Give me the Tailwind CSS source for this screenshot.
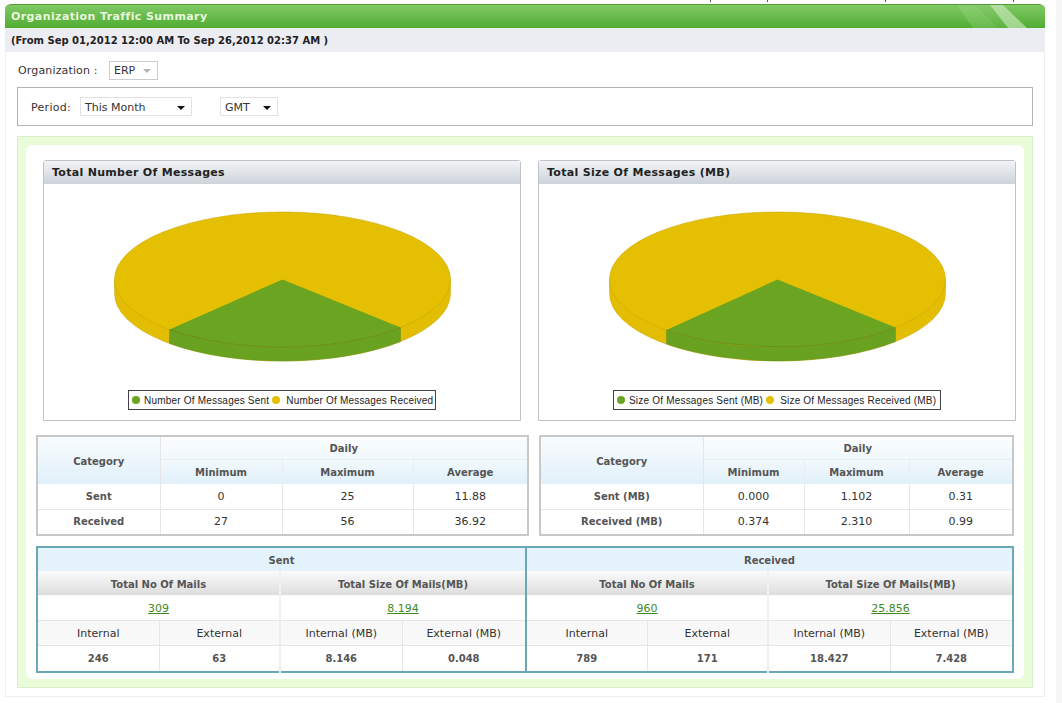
<!DOCTYPE html>
<html lang="en">
<head>
<meta charset="UTF-8" />
<title>Organization Traffic Summary</title>
<script src="https://cdn.jsdelivr.net/npm/@tailwindcss/browser@4"></script>
</head>
<body class="bg-white font-['DejaVu_Sans',Verdana,sans-serif] text-[11px] text-[#333]">
<div class="relative h-[703px] w-[1062px] overflow-hidden pt-[4px]">
  <!-- clipped text from the page above -->
  <div class="absolute left-[710px] top-0 h-[2px] w-px bg-[#555]"></div>
  <div class="absolute left-[767px] top-0 h-[2px] w-px bg-[#555]"></div>
  <div class="absolute left-[885px] top-0 h-[2px] w-px bg-[#555]"></div>
  <div class="absolute left-[1013px] top-0 h-[2px] w-px bg-[#555]"></div>
  <div class="absolute bottom-0 right-0 top-0 w-[6px] bg-[#f7f7f7]"></div>

  <div class="ml-[5px] w-[1040px] h-[693px] border border-t-0 border-[#eeeeee]">
    <!-- title bar -->
    <div class="relative -mx-px h-[24px] rounded-t-[6px] border-t border-[#4f9e38] bg-gradient-to-b from-[#80c964] to-[#4fac31] pl-[6px] text-[11px] font-bold leading-[24px] tracking-[0.4px] text-[#e9f6df]">
      Organization Traffic Summary
      <svg class="absolute right-0 top-0" width="90" height="23" viewBox="0 0 90 23">
        <polygon points="2,0 20,0 43,23 18,23" fill="#a6d98f" fill-opacity="0.3"/>
        <polygon points="20,0 35,0 53,23 43,23" fill="#a6d98f" fill-opacity="0.15"/>
        <polygon points="35,0 48,0 72,23 53,23" fill="#d6efc8" fill-opacity="0.6"/>
      </svg>
    </div>
    <div class="-mx-px h-[24px] bg-[#ecedf3] pl-[6px] text-[10px] font-bold leading-[25px] text-[#222]">(From Sep 01,2012 12:00 AM To Sep 26,2012 02:37 AM )</div>

    <!-- organization -->
    <div class="mt-[8px] flex h-[20px] items-center pl-[12px]">
      <span class="w-[91px] pt-[2px] tracking-[0.15px]">Organization :</span>
      <div class="flex h-[19px] w-[49px] items-center justify-between border border-[#cccccc] pl-[4px] pr-[6px] pt-[2px]">
        <span>ERP</span>
        <span class="h-0 w-0 border-x-[4px] border-t-[4px] border-x-transparent border-t-[#b5b5b5]"></span>
      </div>
    </div>

    <!-- period -->
    <div class="ml-[11px] mt-[7px] flex h-[39px] w-[1016px] items-center border border-[#b4b4b4] pl-[13px]">
      <span class="w-[49px] pt-[4px] tracking-[0.3px]">Period:</span>
      <div class="flex h-[19px] w-[112px] items-center justify-between border border-[#e2e2e2] pl-[4px] pr-[6px] pt-[3px]">
        <span>This Month</span>
        <span class="h-0 w-0 border-x-[4px] border-t-[4px] border-x-transparent border-t-[#111]"></span>
      </div>
      <div class="ml-[28px] flex h-[19px] w-[58px] items-center justify-between border border-[#e2e2e2] pl-[4px] pr-[6px] pt-[3px]">
        <span>GMT</span>
        <span class="h-0 w-0 border-x-[4px] border-t-[4px] border-x-transparent border-t-[#111]"></span>
      </div>
    </div>

    <!-- report box -->
    <div class="ml-[11px] mt-[10px] h-[552px] w-[1016px] border border-[#d9efc8] bg-[#e9fbd9] p-[8px]">
      <div class="h-[534px] w-[998px] rounded-[6px] bg-white pt-[15px]">
        <!-- charts -->
        <div class="flex gap-[17px] pl-[17px]">
          <div class="h-[261px] w-[478px] rounded-t-[3px] border border-[#bfc3c8]">
            <div class="h-[23px] bg-gradient-to-b from-[#f2f4f6] to-[#cdd3da] pl-[8px] font-bold leading-[24px] tracking-[0.3px] text-[#222]">Total Number Of Messages</div>
            <svg class="block" width="476" height="205" viewBox="43.5 184 476 205">
              <path d="M114 279.5V293.5A168 67.5 0 0 0 450 293.5V279.5Z" fill="#e3bd02" stroke="#c9a808" stroke-width="0.5"/>
              <path d="M169 329.5A168 67.5 0 0 0 400 327.6V341.6A168 67.5 0 0 1 169 343.5Z" fill="#69a221" stroke="#5b8c1e" stroke-width="0.4"/>
              <ellipse cx="282" cy="279.5" rx="168" ry="67.5" fill="#e5bf02" stroke="#caa70a" stroke-width="0.6"/>
              <path d="M282 279.5L169 329.5A168 67.5 0 0 0 400 327.6Z" fill="#6ba421"/>
              <path d="M169 329.5A168 67.5 0 0 0 400 327.6" fill="none" stroke="#4f7f1c" stroke-width="0.6"/>
            </svg>
            <div class="mt-[1px] flex justify-center">
              <div class="flex h-[20px] w-[308px] items-center gap-[4px] whitespace-nowrap border border-[#444] pl-[3px] font-['Liberation_Sans',Arial,sans-serif] text-[10px] tracking-[0.2px] text-[#222]">
                <span class="size-[8px] shrink-0 rounded-full bg-[#6ba421]"></span><span class="mr-[-1px]">Number Of Messages Sent</span>
                <span class="size-[8px] shrink-0 rounded-full bg-[#e5bf02]"></span><span class="ml-[2px]">Number Of Messages Received</span>
              </div>
            </div>
          </div>
          <div class="h-[261px] w-[478px] rounded-t-[3px] border border-[#bfc3c8]">
            <div class="h-[23px] bg-gradient-to-b from-[#f2f4f6] to-[#cdd3da] pl-[8px] font-bold leading-[24px] tracking-[0.3px] text-[#222]">Total Size Of Messages (MB)</div>
            <svg class="block" width="476" height="205" viewBox="43.5 184 476 205">
              <path d="M114 279.5V293.5A168 67.5 0 0 0 450 293.5V279.5Z" fill="#e3bd02" stroke="#c9a808" stroke-width="0.5"/>
              <path d="M171 330A168 67.5 0 0 0 400 327.6V341.6A168 67.5 0 0 1 171 344Z" fill="#69a221" stroke="#5b8c1e" stroke-width="0.4"/>
              <ellipse cx="282" cy="279.5" rx="168" ry="67.5" fill="#e5bf02" stroke="#caa70a" stroke-width="0.6"/>
              <path d="M282 279.5L171 330A168 67.5 0 0 0 400 327.6Z" fill="#6ba421"/>
              <path d="M171 330A168 67.5 0 0 0 400 327.6" fill="none" stroke="#4f7f1c" stroke-width="0.6"/>
            </svg>
            <div class="mt-[1px] flex justify-center">
              <div class="flex h-[20px] w-[328px] items-center gap-[4px] whitespace-nowrap border border-[#444] pl-[3px] font-['Liberation_Sans',Arial,sans-serif] text-[10px] tracking-[0.2px] text-[#222]">
                <span class="size-[8px] shrink-0 rounded-full bg-[#6ba421]"></span><span class="mr-[-1px]">Size Of Messages Sent (MB)</span>
                <span class="size-[8px] shrink-0 rounded-full bg-[#e5bf02]"></span><span class="ml-[2px]">Size Of Messages Received (MB)</span>
              </div>
            </div>
          </div>
        </div>

        <!-- daily tables -->
        <div class="mt-[14px] flex gap-[10px] pl-[10px]">
          <table class="h-[101px] w-[493px] table-fixed border-collapse border-2 border-[#c8c8c8] text-center">
            <colgroup><col class="w-[123px]"/><col class="w-[122px]"/><col class="w-[131px]"/><col/></colgroup>
            <tr class="h-[23px]">
              <th rowspan="2" class="border-r border-[#e6e6e6] bg-gradient-to-b from-[#f9fcfe] to-[#e0f0fa] pt-[1px] text-[10px] font-bold text-[#555]">Category</th>
              <th colspan="3" class="border-b border-[#e3edf3] bg-gradient-to-b from-[#fbfdfe] to-[#f0f8fc] pt-[2px] text-[10px] font-bold text-[#555]">Daily</th>
            </tr>
            <tr class="h-[25px] bg-gradient-to-b from-[#f3f9fc] to-[#e0f0fa] text-[10px] font-bold text-[#555]">
              <th class="border-r border-[#e8eff3]">Minimum</th><th class="border-r border-[#e8eff3]">Maximum</th><th>Average</th>
            </tr>
            <tr class="h-[25px] border-b border-[#e6e6e6]">
              <td class="border-r border-[#e6e6e6] text-[10px] font-bold text-[#555]">Sent</td><td class="border-r border-[#e6e6e6]">0</td><td class="border-r border-[#e6e6e6]">25</td><td>11.88</td>
            </tr>
            <tr class="h-[25px]">
              <td class="border-r border-[#e6e6e6] pb-[2px] text-[10px] font-bold text-[#555]">Received</td><td class="border-r border-[#e6e6e6]">27</td><td class="border-r border-[#e6e6e6]">56</td><td>36.92</td>
            </tr>
          </table>
          <table class="h-[101px] w-[475px] table-fixed border-collapse border-2 border-[#c8c8c8] text-center">
            <colgroup><col class="w-[163px]"/><col class="w-[101px]"/><col class="w-[105px]"/><col/></colgroup>
            <tr class="h-[23px]">
              <th rowspan="2" class="border-r border-[#e6e6e6] bg-gradient-to-b from-[#f9fcfe] to-[#e0f0fa] pt-[1px] text-[10px] font-bold text-[#555]">Category</th>
              <th colspan="3" class="border-b border-[#e3edf3] bg-gradient-to-b from-[#fbfdfe] to-[#f0f8fc] pt-[2px] text-[10px] font-bold text-[#555]">Daily</th>
            </tr>
            <tr class="h-[25px] bg-gradient-to-b from-[#f3f9fc] to-[#e0f0fa] text-[10px] font-bold text-[#555]">
              <th class="border-r border-[#e8eff3]">Minimum</th><th class="border-r border-[#e8eff3]">Maximum</th><th>Average</th>
            </tr>
            <tr class="h-[25px] border-b border-[#e6e6e6]">
              <td class="border-r border-[#e6e6e6] text-[10px] font-bold text-[#555]">Sent (MB)</td><td class="border-r border-[#e6e6e6]">0.000</td><td class="border-r border-[#e6e6e6]">1.102</td><td>0.31</td>
            </tr>
            <tr class="h-[25px]">
              <td class="border-r border-[#e6e6e6] pb-[2px] text-[10px] font-bold text-[#555]">Received (MB)</td><td class="border-r border-[#e6e6e6]">0.374</td><td class="border-r border-[#e6e6e6]">2.310</td><td>0.99</td>
            </tr>
          </table>
        </div>

        <!-- sent / received table -->
        <div class="ml-[10px] mt-[10px]">
          <table class="h-[127px] w-[978px] table-fixed border-collapse border-2 border-[#6ba8b5] text-center">
            <colgroup>
              <col class="w-[122px]"/><col class="w-[121px]"/><col class="w-[122px]"/><col class="w-[124px]"/>
              <col class="w-[121px]"/><col class="w-[121px]"/><col class="w-[122px]"/><col/>
            </colgroup>
            <tr class="h-[24px] bg-[#e3f2fb] text-[10px] font-bold text-[#555]">
              <th colspan="4" class="border-r-2 border-[#6ba8b5] pt-[1px]">Sent</th>
              <th colspan="4" class="pt-[1px]">Received</th>
            </tr>
            <tr class="h-[24px] bg-gradient-to-b from-[#fbfbfb] to-[#dddddd] text-[10px] font-bold text-[#555]">
              <th colspan="2" class="border-r-2 border-[#f0f0f0] pt-[1px]">Total No Of Mails</th>
              <th colspan="2" class="border-r-2 border-[#6ba8b5] pt-[1px]">Total Size Of Mails(MB)</th>
              <th colspan="2" class="border-r-2 border-[#f0f0f0] pt-[1px]">Total No Of Mails</th>
              <th colspan="2" class="pt-[1px]">Total Size Of Mails(MB)</th>
            </tr>
            <tr class="h-[24px] border-b border-[#e6e6e6] text-[#3f8a1f]">
              <td colspan="2" class="border-r-2 border-[#f0f0f0] pt-[3px]"><a class="underline">309</a></td>
              <td colspan="2" class="border-r-2 border-[#6ba8b5] pt-[3px]"><a class="underline">8.194</a></td>
              <td colspan="2" class="border-r-2 border-[#f0f0f0] pt-[3px]"><a class="underline">960</a></td>
              <td colspan="2" class="pt-[3px]"><a class="underline">25.856</a></td>
            </tr>
            <tr class="h-[25px] border-b border-[#e6e6e6] bg-[#f8f8f8]">
              <td class="border-r border-[#e6e6e6] pt-[2px]">Internal</td><td class="border-r-2 border-[#eeeeee] pt-[2px]">External</td>
              <td class="border-r border-[#e6e6e6] pt-[2px]">Internal (MB)</td><td class="border-r-2 border-[#6ba8b5] pt-[2px]">External (MB)</td>
              <td class="border-r border-[#e6e6e6] pt-[2px]">Internal</td><td class="border-r-2 border-[#eeeeee] pt-[2px]">External</td>
              <td class="border-r border-[#e6e6e6] pt-[2px]">Internal (MB)</td><td class="pt-[2px]">External (MB)</td>
            </tr>
            <tr class="h-[26px] text-[10px] font-bold text-[#555]">
              <td class="border-r border-[#e6e6e6]">246</td><td class="border-r-2 border-[#eeeeee]">63</td>
              <td class="border-r border-[#e6e6e6]">8.146</td><td class="border-r-2 border-[#6ba8b5]">0.048</td>
              <td class="border-r border-[#e6e6e6]">789</td><td class="border-r-2 border-[#eeeeee]">171</td>
              <td class="border-r border-[#e6e6e6]">18.427</td><td>7.428</td>
            </tr>
          </table>
        </div>
      </div>
    </div>
  </div>
</div>
</body>
</html>
